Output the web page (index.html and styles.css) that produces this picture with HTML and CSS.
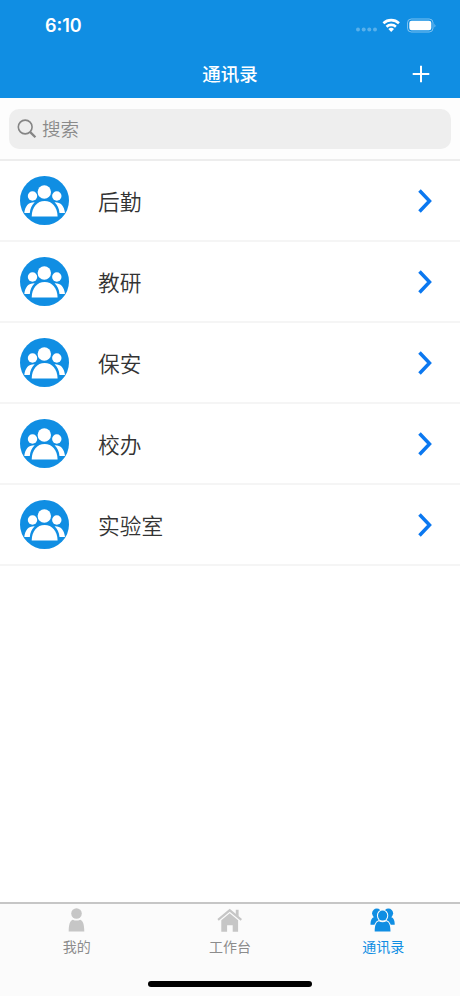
FILE: index.html
```html
<!DOCTYPE html>
<html lang="zh-CN">
<head>
    <meta charset="UTF-8">
    <meta name="viewport" content="width=device-width, initial-scale=1.0">
    <title>通讯录</title>
    <link rel="stylesheet" href="styles.css">
</head>
<body>
    <svg class="symbols">
        <symbol id="group" viewBox="0 0 49 49">
            <circle cx="24.5" cy="24.5" r="24.5" fill="#108ee3"></circle>
            <g fill="#fff">
                <circle cx="24.3" cy="16" r="6.7"></circle>
                <circle cx="12.5" cy="20" r="4.7"></circle>
                <circle cx="36.8" cy="20" r="4.7"></circle>
                <path d="M11.700 40.500C12 31 17 25 24.600 25S37.300 31 37.600 40.500z"></path>
                <path d="M4.300 37C5 30 8.500 26 14.700 26.200C11.800 29 10.200 32.500 9.800 37z"></path>
                <path d="M45 37C44.300 30 40.800 26 34.600 26.200C37.500 29 39.100 32.500 39.500 37z"></path>
            </g>
        </symbol>
        <symbol id="arrow" viewBox="0 0 16 24">
            <path d="M2.500 1.500L12.500 12L2.500 22.500" fill="none" stroke="#0b78f0" stroke-width="3.500"></path>
        </symbol>
    </svg>

    <header class="header">
        <div class="status-bar">
            <span class="time">6:10</span>
            <svg class="status-icons" width="82" height="16" viewBox="0 0 82 16">
                <g fill="#fff" fill-opacity=".3">
                    <circle cx="3" cy="12.500" r="2"></circle>
                    <circle cx="8.700" cy="12.500" r="2"></circle>
                    <circle cx="14.300" cy="12.500" r="2"></circle>
                    <circle cx="20" cy="12.500" r="2"></circle>
                </g>
                <g fill="none" stroke="#fff" stroke-width="2.600">
                    <path d="M28.400 6.200a11.500 11.500 0 0 1 15.600 0"></path>
                    <path d="M31.500 9.700a7 7 0 0 1 9.400 0"></path>
                </g>
                <path d="M36.200 14.900l-2.800-2.900a4.100 4.100 0 0 1 5.600 0z" fill="#fff"></path>
                <rect x="52.500" y="2" width="25.500" height="13" rx="3.800" fill="none" stroke="#fff" stroke-opacity=".45"></rect>
                <rect x="54.300" y="3.800" width="22" height="9.400" rx="2.300" fill="#fff"></rect>
                <path d="M79.500 6.400q1.800 2.100 0 4.200z" fill="#fff" fill-opacity=".5"></path>
            </svg>
        </div>
        <div class="nav-bar">
            <h1 class="title">通讯录</h1>
            <svg class="add" width="18" height="18" viewBox="0 0 18 18" stroke="#fff" stroke-width="2">
                <path d="M9 .7v16.600M.7 9h16.600"></path>
            </svg>
        </div>
    </header>

    <div class="search">
        <div class="search-box">
            <svg width="20" height="20" viewBox="0 0 20 20" fill="none" stroke="#858585">
                <circle cx="8.200" cy="8" r="6.900" stroke-width="1.600"></circle>
                <path d="M13 12.900l5.400 5.400" stroke-width="2.300"></path>
            </svg>
            <span>搜索</span>
        </div>
    </div>

    <ul class="list">
        <li class="item">
            <svg class="avatar"><use href="#group"></use></svg>
            <span class="name">后勤</span>
            <svg class="arrow"><use href="#arrow"></use></svg>
        </li>
        <li class="item">
            <svg class="avatar"><use href="#group"></use></svg>
            <span class="name">教研</span>
            <svg class="arrow"><use href="#arrow"></use></svg>
        </li>
        <li class="item">
            <svg class="avatar"><use href="#group"></use></svg>
            <span class="name">保安</span>
            <svg class="arrow"><use href="#arrow"></use></svg>
        </li>
        <li class="item">
            <svg class="avatar"><use href="#group"></use></svg>
            <span class="name">校办</span>
            <svg class="arrow"><use href="#arrow"></use></svg>
        </li>
        <li class="item">
            <svg class="avatar"><use href="#group"></use></svg>
            <span class="name">实验室</span>
            <svg class="arrow"><use href="#arrow"></use></svg>
        </li>
    </ul>

    <footer class="footer">
        <nav class="tabs">
            <a class="tab">
                <svg width="28" height="26" viewBox="0 0 28 26" fill="currentColor">
                    <circle cx="13.500" cy="5.500" r="5.300"></circle>
                    <path d="M5.700 23.500C5.700 16.500 7 12.600 9.800 11.700q3.700 1.800 7.400 0C20 12.600 21.300 16.500 21.300 23.500z"></path>
                </svg>
                <span>我的</span>
            </a>
            <a class="tab">
                <svg width="28" height="26" viewBox="0 0 28 26" fill="currentColor">
                    <path d="M13.700.8L26 11l-1.300 1.700L13.700 3.800 2.700 12.700 1.400 11z"></path>
                    <path d="M19.800 1.800h2.800v7l-2.800-2.400z"></path>
                    <path d="M13.700 5.300l8.400 6.900v11.500h-5.400v-6.500h-5.600v6.500H5.300V12.200z"></path>
                </svg>
                <span>工作台</span>
            </a>
            <a class="tab active">
                <svg width="28" height="26" viewBox="0 0 28 26" fill="currentColor">
                    <ellipse cx="7.800" cy="5.300" rx="4.700" ry="4.800"></ellipse>
                    <ellipse cx="19.400" cy="5.300" rx="4.700" ry="4.800"></ellipse>
                    <path d="M1.500 16.700C1.500 12 2.800 9.700 5.500 9h16.200C24.400 9.700 25.700 12 25.700 16.700z"></path>
                    <g stroke="#fbfbfb" stroke-width="2.200" paint-order="stroke">
                        <path d="M5.700 23.600C5.700 17.400 7 14.200 9.800 13.300q3.800 1.800 7.600 0C20.200 14.200 21.500 17.400 21.500 23.600z"></path>
                        <ellipse cx="13.600" cy="7.600" rx="4.600" ry="5"></ellipse>
                    </g>
                </svg>
                <span>通讯录</span>
            </a>
        </nav>
        <div class="home-indicator"></div>
    </footer>
</body>
</html>
```
FILE: styles.css
```css
* {
    margin: 0;
    padding: 0;
    box-sizing: border-box;
}

body {
    height: 100vh;
    display: flex;
    flex-direction: column;
    background-color: #fff;
    color: #333;
    font-family: Inter, "Noto Sans CJK SC", sans-serif;
    font-weight: 350;
    overflow: hidden;
}

.symbols {
    display: none;
}

.header {
    height: 98px;
    background-color: #108ee3;
    color: #fff;
}

.status-bar {
    height: 50px;
    padding: 0 23px 0 45px;
    display: flex;
    align-items: center;
    justify-content: space-between;
}

.time {
    font-size: 18px;
    font-weight: 600;
}

.nav-bar {
    height: 48px;
    padding: 0 30px;
    display: grid;
    grid-template-columns: 18px 1fr 18px;
    align-items: center;
}

.title {
    grid-column: 2;
    padding-bottom: 2px;
    text-align: center;
    font-size: 18.5px;
    font-weight: 500;
}

.search {
    height: 63px;
    padding: 11px 9px;
    background-color: #fdfdfd;
    border-bottom: 2px solid #ededed;
}

.search-box {
    height: 40px;
    padding-left: 8px;
    display: flex;
    align-items: center;
    gap: 5px;
    border-radius: 10px;
    background-color: #eee;
    color: #8a8a8a;
    font-size: 18.5px;
}

.search-box span {
    padding-bottom: 2px;
}

.list {
    flex: 1;
    list-style: none;
}

.item {
    height: 81px;
    padding: 0 27px 0 20px;
    display: flex;
    align-items: center;
    border-bottom: 2px solid #f5f5f5;
}

.avatar {
    width: 49px;
    height: 49px;
}

.name {
    flex: 1;
    padding: 0 0 1px 29px;
    font-size: 21.7px;
}

.arrow {
    width: 16px;
    height: 24px;
}

.footer {
    height: 94px;
    display: flex;
    flex-direction: column;
    background-color: #fbfbfb;
    border-top: 2px solid #c6c6c6;
}

.tabs {
    height: 79px;
    display: flex;
}

.tab {
    flex: 1;
    padding-top: 4px;
    display: flex;
    flex-direction: column;
    align-items: center;
    color: #c6c6c6;
    font-size: 14px;
    font-weight: 400;
    line-height: 26px;
}

.tab span {
    color: #8c8c8c;
}

.tab.active,
.tab.active span {
    color: #108ee3;
}

.home-indicator {
    width: 164px;
    height: 6px;
    margin: -2px auto 0;
    border-radius: 3px;
    background-color: #000;
}
```
